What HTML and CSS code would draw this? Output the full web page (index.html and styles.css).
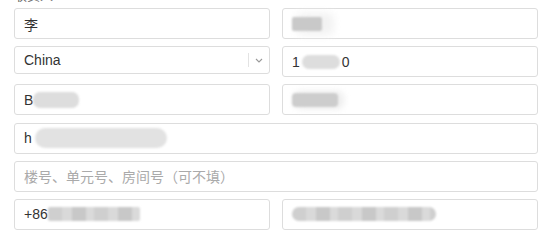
FILE: index.html
```html
<!DOCTYPE html>
<html lang="zh-CN">
<head>
    <meta charset="UTF-8">
    <meta name="viewport" content="width=device-width, initial-scale=1.0">
    <title>收货地址</title>
    <link rel="stylesheet" href="styles.css">
</head>
<body>
    <section class="address-form">
        <p class="section-title">收货人</p>
        <div class="field-grid">
            <div class="field">李</div>
            <div class="field"><span class="blur blur-a"></span></div>

            <div class="field select-field">
                <span>China</span>
                <span class="select-arrow">
                    <svg width="8" height="5" viewBox="0 0 8 5"><path d="M1 1l3 3 3-3" fill="none" stroke="#999" stroke-width="1.1"/></svg>
                </span>
            </div>
            <div class="field">1<span class="blur blur-b"></span>0</div>

            <div class="field">B<span class="blur blur-c"></span></div>
            <div class="field"><span class="blur blur-d"></span></div>

            <div class="field wide">h<span class="blur blur-e"></span></div>
            <div class="field wide placeholder">楼号、单元号、房间号（可不填）</div>

            <div class="field">+86<span class="blur mosaic blur-f"></span></div>
            <div class="field"><span class="blur mosaic blur-g"></span></div>
        </div>
    </section>
</body>
</html>
```

FILE: styles.css
```css
* {
    margin: 0;
    padding: 0;
    box-sizing: border-box;
}
body {
    background-color: #fff;
    font-family: "Liberation Sans", Arial, "Noto Sans CJK SC", sans-serif;
    font-size: 14px;
    color: #333;
}
.address-form {
    padding: 0 16px 0 14px;
}
.section-title {
    margin: -11px 0 5px;
    line-height: 14px;
    font-size: 13px;
    color: #666;
}
.field-grid {
    display: grid;
    grid-template-columns: 256px 256px;
    column-gap: 12px;
    row-gap: 7.2px;
}
.field {
    display: flex;
    align-items: center;
    height: 31px;
    padding: 0 9px;
    border: 1px solid #ddd;
    border-radius: 3px;
    white-space: nowrap;
}
.wide {
    grid-column: 1 / 3;
}
.placeholder {
    color: #aaa;
}
.select-field {
    height: 28px;
    justify-content: space-between;
    padding-right: 0;
}
.select-arrow {
    display: flex;
    align-items: center;
    justify-content: center;
    width: 21px;
    height: 14px;
    border-left: 1px solid #e3e3e3;
}
.blur {
    display: inline-block;
    height: 14px;
    border-radius: 7px;
    background-color: #d6d6d6;
    filter: blur(0.8px);
}
.blur-a {
    width: 30px;
    height: 14px;
    border-radius: 2px;
    background-color: #c9c9c9;
    box-shadow: 8px 0 8px 4px #f2f2f2;
}
.blur-b {
    width: 38px;
    margin: 0 2px;
    background-color: #ddd;
}
.blur-c {
    width: 46px;
    height: 16px;
    background-color: #ddd;
}
.blur-d {
    width: 46px;
    height: 14px;
    border-radius: 4px;
    background-color: #cdcdcd;
    box-shadow: 4px 0 6px 2px #eee;
}
.blur-e {
    width: 132px;
    height: 20px;
    margin-left: 3px;
    border-radius: 10px;
    background-color: #e2e2e2;
}
.mosaic {
    height: 14px;
    border-radius: 2px;
    background-image: repeating-linear-gradient(90deg, #cfcfcf 0 14px, #d9d9d9 14px 24px, #c8c8c8 24px 38px, #dadada 38px 46px);
}
.blur-f {
    width: 92px;
}
.blur-g {
    width: 144px;
    border-radius: 7px;
}
```
